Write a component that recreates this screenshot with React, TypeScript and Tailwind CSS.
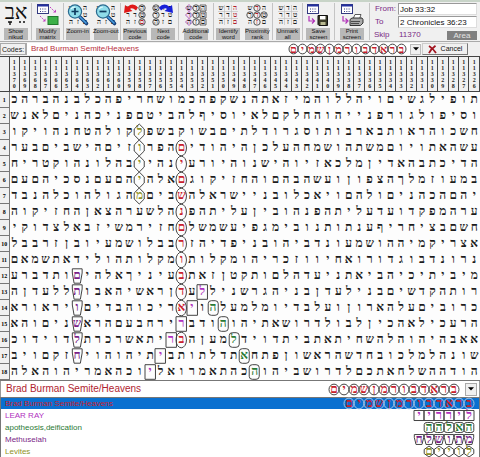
import type { ReactNode } from 'react';
import clsx from 'clsx';

type Shape = 'oval' | 'box' | 'round' | 'cup' | 'diamond';

interface Code {
  name: string;
  letters: string;
  shape: Shape;
  color: string;
}

const codes: Code[] = [
  { name: 'Brad Burman Semite/Heavens', letters: 'בראדבורמןשמים', shape: 'oval', color: 'text-[#c8202c]' },
  { name: 'LEAR RAY', letters: 'לירריי', shape: 'box', color: 'text-[#b030c0]' },
  { name: 'apotheosis,deification', letters: 'האלהה', shape: 'round', color: 'text-[#2a7a34]' },
  { name: 'Methuselah', letters: 'מתושלח', shape: 'cup', color: 'text-[#7a1f88]' },
  { name: 'Levites', letters: 'לויים', shape: 'diamond', color: 'text-[#8f9226]' },
];

// Each row is kept in reading order, so the first letter is the rightmost cell
const rows = [
  'תופילגשיםויהללו' + 'המיזאתהנשקפהכמו' + 'שחריפהכלבנהברהכ',
  'וסיפולגורפנייהו' + 'החלקםלאיוסיףלהב' + 'יטםפניכהניםלאנש',
  'חשכוהראותבארבות' + 'וסגרודלתיםבשוקב' + 'שפלקולהטחנהויקו',
  'עשהאתויוםמשתהוש' + 'מחהעלכןהיהודיםה' + 'פרוזיםהישביםבער',
  'הדיכתבהאדיןמלכא' + 'זיוהישנוהיורעינ' + 'הייבהלונהוקטריח',
  'במעוזמלךהצפוןוע' + 'שהבהםוהחזיקוגםא' + 'להיהםעםנסכיהםעם',
  'יהםהכהניםולהםוי' + 'אכלובניישראלהשב' + 'יםמהגולהוכלהנבד',
  'ערהמפקדועדעליתה' + 'פנהוביןעליתהפנה' + 'לשערהצאןהחזיקוה',
  'חשםבציחריףענתות' + 'נובימגפיעשמשלםח' + 'זירמשיזבאלצדוקי',
  'אצריקמיההושמעונ' + 'דביהובניפדיהזרב' + 'בלושמעיובןזרבבל',
  'נרונדבוגדורואחי' + 'ווזכריהומקלותומ' + 'קלותהולידאתשמאם',
  'מיביתיכיהביאתני' + 'עדהלםותקטןזאתבע' + 'יניךאלהיםותדברע',
  'רותהקדשיםבנילעד' + 'ןבניהגרשניללעדן' + 'ראשיהאבותללעדןה',
  'כרוביםעלהארוןוע' + 'לבדיומלמעלהויאר' + 'יכוהבדיםויראורא',
  'הרעכילאהכיןלבול' + 'דרושאתיהוהודברי' + 'רחבעםהראשניםוהא',
  'אאבהיהוהלהשחיתא' + 'תביתדוידלמעןהבר' + 'יתאשרכרתלדוידוכ',
  'שונהלמלכובחדשהר' + 'אשוןפתחאתדלתותב' + 'יתיהוהויחזקםויב',
  'הודההשלחאתכםלדר' + 'ושביהוהכהתאמרוא' + 'ליוכהאמריהוהאלה',
];

const columns = Array.from({ length: 45 }, (_, i) => String(11370 - i));

function codeAt(row: number, col: number): Code | null {
  if (row >= 13 && col === 31 - row) return codes[1];
  if (row >= 14 && col === row + 5) return codes[2];
  if (col === 16 && row >= 4 && row <= 16) return codes[0];
  if (col === 6 && row >= 12 && row <= 17) return codes[3];
  if (col === 12 && row >= 3 && row <= 7) return codes[4];
  return null;
}

function Outline({ shape, light = false }: { shape: Shape; light?: boolean }) {
  return (
    <svg
      viewBox="0 0 10 16"
      preserveAspectRatio="none"
      className="absolute inset-0 w-full h-full overflow-visible"
      fill="none"
      stroke={light ? '#a8c4e4' : '#444'}
      strokeWidth="1"
    >
      {shape === 'oval' && <ellipse cx="5" cy="8" rx="5" ry="7.8" vectorEffect="non-scaling-stroke" />}
      {shape === 'box' && <rect x="0" y="0.7" width="10" height="14.6" vectorEffect="non-scaling-stroke" />}
      {shape === 'round' && <rect x="0.2" y="0.7" width="9.6" height="14.6" rx="3" vectorEffect="non-scaling-stroke" />}
      {shape === 'cup' && <path d="M0.3 .8H9.7V5L8 15.2H2L.3 5Z" vectorEffect="non-scaling-stroke" />}
      {shape === 'diamond' && <path d="M5 0L9.8 5V11L5 16L.2 11V5Z" vectorEffect="non-scaling-stroke" />}
    </svg>
  );
}

function CodeLetters({ code, small = false, light = false }: { code: Code; small?: boolean; light?: boolean }) {
  return (
    <span dir="rtl" className={clsx('flex shrink-0 font-["Liberation_Serif",serif] font-bold', code.color)}>
      {code.letters.split('').map((letter, i) => (
        <span
          key={i}
          className={clsx(
            'relative flex items-center justify-center',
            small ? 'w-[9px] h-[10px] text-[11px] leading-[10px]' : 'w-[10px] h-[11px] text-xs leading-[11px]',
          )}
        >
          <Outline shape={code.shape} light={light} />
          {letter}
        </span>
      ))}
    </span>
  );
}

function Arrow() {
  return (
    <svg viewBox="0 0 6 4" className="w-[6px] h-[4px]">
      <path d="M0 0.3H6L3 3.6Z" fill="#000" />
    </svg>
  );
}

const miniRows = ['שדה', 'רדט', 'הזם'];

function MiniGrid({ rings = '', red = '' }: { rings?: string; red?: string }) {
  return (
    <g>
      {miniRows.map((row, r) =>
        row.split('').map((letter, c) => {
          const key = String(r * 3 + c);
          const cx = 4 + c * 7;
          const cy = 4 + r * 7;
          return (
            <g key={key}>
              {rings.includes(key) && <circle cx={cx} cy={cy} r="3.2" fill="none" stroke="#444" strokeWidth=".9" />}
              <text
                x={cx}
                y={cy + 2}
                fontSize="7"
                fontWeight="bold"
                textAnchor="middle"
                fill={red.includes(key) ? '#b0202c' : '#222'}
                fontFamily="Liberation Serif, serif"
              >
                {letter}
              </text>
            </g>
          );
        }),
      )}
    </g>
  );
}

function GridLines() {
  return <path d="M7.5 1V21M14.5 1V21M1 7.5H21M1 14.5H21" stroke="#bbb" strokeWidth=".6" />;
}

function Calendar() {
  return (
    <g>
      <rect x="0.5" y="0.5" width="11" height="9" fill="#fff" stroke="#333a80" />
      <rect x="0.5" y="0.5" width="11" height="2" fill="#2430a0" />
      <path d="M3 5H10M3 7.5H10" stroke="#333a80" strokeDasharray="1 1.3" />
    </g>
  );
}

function Magnifier({ plus = false }: { plus?: boolean }) {
  return (
    <>
      <MiniGrid />
      <path d="M13 13L19.5 19.5" stroke="#16407c" strokeWidth="3.6" strokeLinecap="round" />
      <path d="M13 13L19 19" stroke="#4aa0e0" strokeWidth="1.6" strokeLinecap="round" />
      <circle cx="8" cy="7.5" r="6.6" fill="#8fdcea" stroke="#2a6a90" strokeWidth="1.2" />
      <path d="M4 5A5 5 0 0 1 8 3" stroke="#e4fbff" strokeWidth="1.2" fill="none" />
      <path d={plus ? 'M4.5 7.5H11.5M8 4V11' : 'M4.5 7.5H11.5'} stroke="#103c60" strokeWidth="1.7" />
    </>
  );
}

interface Tool {
  label: string;
  icon: ReactNode;
}

const nikud = (
  <>
    <text x="11" y="15" fontSize="21" textAnchor="middle" fill="#111" fontFamily="Liberation Serif, serif">
      אב
    </text>
    <path d="M3 18H7M5 18V21M14 18H16M18 18H20" stroke="#111" strokeWidth="1.4" />
  </>
);

const matrix = (
  <>
    <Calendar />
    <path d="M13 3L18 8M3 12L8 17" stroke="#c040c0" strokeDasharray="1.5 1" />
    <path d="M16 8.5H19V5.5ZM5.5 17.5H8.5V14.5Z" fill="#c040c0" />
    <rect x="11" y="12.5" width="10" height="8" fill="#3cb048" stroke="#207a2c" />
  </>
);

const groups: { width: string; tools: Tool[] }[] = [
  { width: 'flex-[32]', tools: [{ label: 'Show nikud', icon: nikud }] },
  { width: 'flex-[31]', tools: [{ label: 'Modify matrix', icon: matrix }] },
  {
    width: 'flex-[57]',
    tools: [
      { label: 'Zoom-in', icon: <Magnifier plus /> },
      { label: 'Zoom-out', icon: <Magnifier /> },
    ],
  },
  {
    width: 'flex-[58]',
    tools: [
      {
        label: 'Previous code',
        icon: (
          <>
            <MiniGrid rings="258" red="8" />
            <path d="M0 9L1 1L3.5 3Q9 -2 14 3.5L12 6.5Q8 3 6 5L8.5 7Z" fill="#e01818" />
          </>
        ),
      },
      {
        label: 'Next code',
        icon: (
          <>
            <MiniGrid rings="036" />
            <path d="M21 9L20 1L17.5 3Q12 -2 7 3.5L9 6.5Q13 3 15 5L12.5 7Z" fill="#1820d8" />
          </>
        ),
      },
    ],
  },
  {
    width: 'flex-[35]',
    tools: [
      {
        label: 'Additional code',
        icon: (
          <>
            <path
              d="M4 .5L7.5 4L4 7.5L.5 4ZM4 7.5L7.5 11L4 14.5L.5 11ZM4 14.5L7.5 18L4 21.5L.5 18Z"
              fill="#f4dcf4"
              stroke="#a050a8"
              strokeWidth=".8"
            />
            <path d="M15 1H21V7H15ZM15 8H21V14H15ZM15 15H21V21H15Z" fill="none" stroke="#444" strokeWidth=".8" />
            <MiniGrid rings="147" />
          </>
        ),
      },
    ],
  },
  {
    width: 'flex-[59]',
    tools: [
      {
        label: 'Identify word',
        icon: (
          <>
            <GridLines />
            <MiniGrid red="258" />
          </>
        ),
      },
      { label: 'Proximity rank', icon: <MiniGrid rings="13457" red="147" /> },
    ],
  },
  {
    width: 'flex-[30]',
    tools: [
      {
        label: 'Unmark all',
        icon: (
          <>
            <GridLines />
            <MiniGrid />
          </>
        ),
      },
    ],
  },
  {
    width: 'flex-[31]',
    tools: [
      {
        label: 'Save screen',
        icon: (
          <>
            <Calendar />
            <path d="M2 12V17H7M5 14.5L7.5 17L5 19.5" stroke="#b030b8" strokeWidth="1.2" fill="none" />
            <path d="M11 11.5H20.5V21.5H12L11 20.5Z" fill="#3c3c28" stroke="#111" />
            <path d="M13 12H18.5V15.5H13Z" fill="#fff" />
            <path d="M13.5 18H18.5V21H13.5Z" fill="#b8b890" />
          </>
        ),
      },
    ],
  },
  {
    width: 'flex-[35]',
    tools: [
      {
        label: 'Print screen',
        icon: (
          <>
            <Calendar />
            <path d="M2 12V17H6M4.5 14.5L7 17L4.5 19.5" stroke="#b030b8" strokeWidth="1.2" fill="none" />
            <path d="M12 15L14 10.5H20L18.5 15Z" fill="#fff" stroke="#333" strokeWidth=".8" />
            <path d="M9 15.5L11 14H21L22 15.5V19L19.5 21.5H9Z" fill="#aaa" stroke="#222" strokeWidth=".9" />
            <path d="M10 17.5H19M10 19.5H18" stroke="#333" strokeWidth=".8" />
          </>
        ),
      },
    ],
  },
];

function Toolbar() {
  return (
    <header className="flex h-[41px] bg-[#f0f0f0] border-t-2 border-[#c8d4c8]">
      {groups.map((group) => (
        <div key={group.tools[0].label} className={clsx('flex min-w-0 justify-around border-r border-[#c4c4c4] my-px', group.width)}>
          {group.tools.map((tool) => (
            <button key={tool.label} type="button" className="flex flex-col items-center justify-between w-6">
              <svg viewBox="0 0 22 22" className="w-[22px] h-[22px] mt-px overflow-visible">
                {tool.icon}
              </svg>
              <span className="w-6 h-[12px] bg-[#b8b8b8] text-[6px] leading-[6px] text-center text-[#111]">
                {tool.label.split(' ').map((word) => (
                  <span key={word} className="flex justify-center whitespace-nowrap">
                    {word}
                  </span>
                ))}
              </span>
            </button>
          ))}
        </div>
      ))}
      <div className="flex-[105] min-w-0 flex flex-col text-[8px] leading-[10px] text-[#7a2a84] pl-1 pr-[3px] pt-px gap-px">
        <div className="flex items-center">
          <label htmlFor="from" className="w-6 pl-px">From:</label>
          <input
            id="from"
            defaultValue="Job 33:32"
            className="flex-1 min-w-0 h-[12px] bg-white border border-[#999] border-r-[#ddd] border-b-[#ddd] text-[#111] px-px"
          />
        </div>
        <div className="flex items-center">
          <label htmlFor="to" className="w-6 pl-px">To</label>
          <input
            id="to"
            defaultValue="2 Chronicles 36:23"
            className="flex-1 min-w-0 h-[12px] bg-white border border-[#999] border-r-[#ddd] border-b-[#ddd] text-[#111] px-px"
          />
        </div>
        <div className="flex items-center pt-px">
          <span className="w-6">Skip</span>
          <span className="flex-1 pl-px">11370</span>
          <button type="button" className="w-[30px] h-[9px] leading-[9px] bg-[#808080] text-[#e4e4e4] text-center">
            Area
          </button>
        </div>
      </div>
    </header>
  );
}

function CodesBar() {
  return (
    <div className="flex h-[15px] py-px bg-[#f0f0f0] text-[8px] border-t border-[#aaa]">
      <label htmlFor="code" className="w-[26px] border border-[#aaa] text-[7px] leading-[11px] text-center text-[#222]">
        Codes:
      </label>
      <div className="flex flex-1 items-center bg-white border-l border-[#aaa] pl-1">
        <select id="code" className="flex-1 min-w-0 appearance-none text-[8px] leading-[12px] text-[#b8303c]">
          {codes.map((code) => (
            <option key={code.name}>{code.name}</option>
          ))}
        </select>
        <CodeLetters code={codes[0]} small />
        <span className="flex items-center justify-center w-[11px] h-[11px] ml-1 bg-[#f0f0f0] border border-[#bbb]">
          <Arrow />
        </span>
      </div>
      <button type="button" className="flex items-center justify-center gap-1 w-[46px] ml-px mr-3 text-[7px] text-[#111] border border-[#ccc] border-r-[#777] border-b-[#777]">
        <svg viewBox="0 0 9 9" className="w-[9px] h-[9px]">
          <path d="M1 1Q5 3.5 8 8M7.5 .8Q3 4 1 8.2" stroke="#a01420" strokeWidth="1.8" fill="none" />
        </svg>
        Cancel
      </button>
    </div>
  );
}

function Matrix() {
  return (
    <table className="w-full table-fixed border-collapse bg-[#fdfdfd] font-['Liberation_Serif',serif]">
      <colgroup>
        <col className="w-[9px]" />
      </colgroup>
      <thead>
        <tr className="h-[35px] bg-[#f0f0f0]">
          <td className="border border-l-0 border-[#444]" />
          {columns.map((column) => (
            <th key={column} className="border border-[#444] p-0 text-[6px] leading-[6px] font-bold text-[#222]">
              {column.split('').map((digit, i) => (
                <span key={i} className="flex justify-center">
                  {digit}
                </span>
              ))}
            </th>
          ))}
        </tr>
      </thead>
      <tbody>
        {rows.map((row, r) => (
          <tr key={r} className="h-[16px]">
            <th className="border border-l-0 border-[#777] bg-[#f0f0f0] p-0 text-[6px] leading-[6px] font-bold text-center">
              {r + 1}
            </th>
            {row
              .split('')
              .reverse()
              .map((letter, c) => {
                const code = codeAt(r + 1, c);
                return (
                  <td
                    key={c}
                    className={clsx(
                      'relative p-0 text-center align-top text-xs leading-[14px] font-bold',
                      code ? code.color : 'text-[#1c1c1c]',
                    )}
                  >
                    {code && <Outline shape={code.shape} />}
                    {letter}
                  </td>
                );
              })}
          </tr>
        ))}
      </tbody>
    </table>
  );
}

function CodeList() {
  return (
    <footer className="border-t border-[#777] bg-white">
      <div className="flex items-center h-[16px] border-x border-[#999] pl-[5px] pr-[2px]">
        <select aria-label="Current code" className="flex-1 min-w-0 appearance-none text-[10px] leading-[14px] text-[#b02430]">
          {codes.map((code) => (
            <option key={code.name}>{code.name}</option>
          ))}
        </select>
        <CodeLetters code={codes[0]} />
        <span className="flex items-center justify-center w-[12px] h-[13px] ml-[6px] bg-[#f0f0f0] border border-[#aaa]">
          <Arrow />
        </span>
      </div>
      <div role="listbox" aria-label="Codes" className="border border-b-0 border-[#777]">
        {codes.map((code, i) => (
          <button
            key={code.name}
            type="button"
            role="option"
            aria-selected={i === 0}
            className={clsx(
              'flex w-full items-center justify-between pl-1 pr-[5px] text-[8px] leading-[11px]',
              code.color,
              i === 0 ? 'h-[11px] bg-[#0a70d0]' : 'h-[12px]',
            )}
          >
            {code.name}
            <CodeLetters code={code} light={i === 0} />
          </button>
        ))}
      </div>
    </footer>
  );
}

export default function App() {
  return (
    <main className="w-full bg-[#f0f0f0] font-['Liberation_Sans',sans-serif]">
      <Toolbar />
      <CodesBar />
      <Matrix />
      <CodeList />
    </main>
  );
}
